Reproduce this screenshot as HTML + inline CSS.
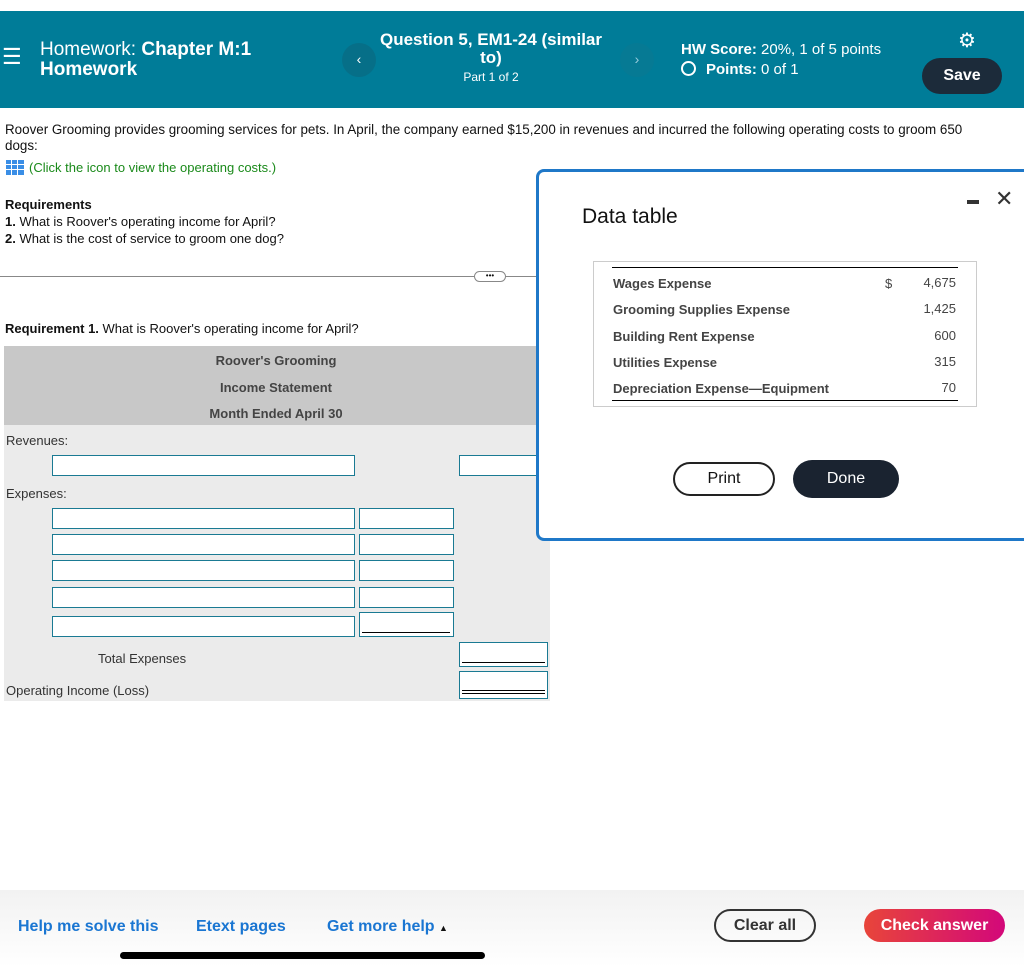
<!DOCTYPE html>
<html><head><style>
*{box-sizing:border-box;margin:0;padding:0}
body{width:1024px;height:967px;background:#fff;font-family:"Liberation Sans",Arial,sans-serif;position:relative;overflow:hidden;color:#111}
.a{position:absolute}
.hdr{left:0;top:11px;width:1024px;height:97px;background:#007c98;color:#fff}
.inp{position:absolute;background:#fff;border:1px solid #1a7a93;height:21px}
.gl{font-size:13px;color:#333}
</style></head><body>
<div class="a hdr">
  <div class="a" style="left:2px;top:36px;font-size:22px;line-height:20px">☰</div>
  <div class="a" style="left:40px;top:29px;font-size:19px;line-height:20px">Homework: <b>Chapter M:1</b><br><b>Homework</b></div>
  <div class="a" style="left:342px;top:32px;width:34px;height:34px;border-radius:50%;background:#066f88;text-align:center;line-height:32px;font-size:14px">‹</div>
  <div class="a" style="left:375px;top:20px;width:232px;text-align:center;font-size:17px;font-weight:bold;line-height:18px">Question 5, EM1-24 (similar<br>to)</div>
  <div class="a" style="left:380px;top:59px;width:222px;text-align:center;font-size:12px">Part 1 of 2</div>
  <div class="a" style="left:620px;top:32px;width:34px;height:34px;border-radius:50%;background:#067a94;text-align:center;line-height:32px;font-size:14px;color:#9cd">›</div>
  <div class="a" style="left:681px;top:30px;font-size:15px"><b>HW Score:</b> 20%, 1 of 5 points</div>
  <div class="a" style="left:681px;top:50px;font-size:15px"><span style="display:inline-block;width:15px;height:15px;border:2px solid #fff;border-radius:50%;vertical-align:-2px;margin-right:10px"></span><b>Points:</b> 0 of 1</div>
  <div class="a" style="left:958px;top:17px;font-size:20px">⚙</div>
  <div class="a" style="left:922px;top:47px;width:80px;height:36px;border-radius:18px;background:#1c2b3a;text-align:center;line-height:36px;font-weight:bold;font-size:16px">Save</div>
</div>
<div class="a" style="left:5px;top:122px;width:990px;font-size:13.4px;line-height:16px">Roover Grooming provides grooming services for pets. In April, the company earned $15,200 in revenues and incurred the following operating costs to groom 650 dogs:</div>
<div class="a" style="left:6px;top:160px;font-size:13px;color:#1a8a1a"><span style="display:inline-block;width:18px;height:15px;background:#3a8ee6;vertical-align:-3px;margin-right:5px;background-image:linear-gradient(90deg,transparent 5px,#fff 5px,#fff 6px,transparent 6px,transparent 11px,#fff 11px,#fff 12px,transparent 12px),linear-gradient(transparent 4px,#fff 4px,#fff 5px,transparent 5px,transparent 9px,#fff 9px,#fff 10px,transparent 10px)"></span>(Click the icon to view the operating costs.)</div>
<div class="a" style="left:5px;top:196px;font-size:13px;line-height:17px"><b>Requirements</b><br><b>1.</b> What is Roover's operating income for April?<br><b>2.</b> What is the cost of service to groom one dog?</div>
<div class="a" style="left:0;top:276px;width:540px;height:1px;background:#888"></div>
<div class="a" style="left:474px;top:271px;width:32px;height:11px;border:1px solid #888;border-radius:6px;background:#fff;font-size:8px;text-align:center;line-height:8px">•••</div>
<div class="a" style="left:5px;top:321px;font-size:13px"><b>Requirement 1.</b> What is Roover's operating income for April?</div>
<div class="a" style="left:4px;top:346px;width:546px;height:79px;background:#c8c8c8"></div>
<div class="a" style="left:4px;top:425px;width:546px;height:276px;background:#ebebeb"></div>
<div class="a" style="left:4px;top:348px;width:544px;text-align:center;font-size:13px;font-weight:bold;color:#444;line-height:26.5px">Roover's Grooming<br>Income Statement<br>Month Ended April 30</div>
<div class="a gl" style="left:6px;top:433px">Revenues:</div>
<div class="inp" style="left:52px;top:455px;width:303px"></div>
<div class="inp" style="left:459px;top:455px;width:90px"></div>
<div class="a gl" style="left:6px;top:486px">Expenses:</div>
<div class="inp" style="left:52px;top:508px;width:303px"></div><div class="inp" style="left:359px;top:508px;width:95px"></div>
<div class="inp" style="left:52px;top:534px;width:303px"></div><div class="inp" style="left:359px;top:534px;width:95px"></div>
<div class="inp" style="left:52px;top:560px;width:303px"></div><div class="inp" style="left:359px;top:560px;width:95px"></div>
<div class="inp" style="left:52px;top:587px;width:303px"></div><div class="inp" style="left:359px;top:587px;width:95px"></div>
<div class="inp" style="left:52px;top:616px;width:303px"></div><div class="inp" style="left:359px;top:612px;width:95px;height:25px;border-bottom:1px solid #1a7a93"><div class="a" style="left:2px;bottom:3px;width:88px;height:1px;background:#000"></div></div>
<div class="a gl" style="left:98px;top:651px">Total Expenses</div>
<div class="inp" style="left:459px;top:642px;width:89px;height:25px"><div class="a" style="left:2px;bottom:3px;width:83px;height:1px;background:#000"></div></div>
<div class="a gl" style="left:6px;top:683px">Operating Income (Loss)</div>
<div class="inp" style="left:459px;top:671px;width:89px;height:28px"><div class="a" style="left:2px;bottom:4px;width:83px;height:4px;border-top:1px solid #000;border-bottom:1px solid #000"></div></div>

<div class="a" style="left:536px;top:169px;width:500px;height:372px;border:3px solid #1f78c8;border-radius:8px;background:#fff">
  <div class="a" style="left:43px;top:33px;font-size:21px">Data table</div>
  <div class="a" style="left:428px;top:28px;width:12px;height:4px;background:#333"></div>
  <div class="a" style="left:456px;top:14px;font-size:22px;color:#333">✕</div>
  <div class="a" style="left:54px;top:89px;width:384px;height:146px;border:1px solid #ccc">
    <div class="a" style="left:18px;top:5px;width:346px;height:134px;border-top:1px solid #000;border-bottom:1px solid #000;font-size:13px;color:#444">
      <div class="a" style="left:1px;top:3px;font-weight:bold;line-height:26.3px">Wages Expense<br>Grooming Supplies Expense<br>Building Rent Expense<br>Utilities Expense<br>Depreciation Expense—Equipment</div>
      <div class="a" style="left:273px;top:8px">$</div>
      <div class="a" style="right:2px;top:2px;text-align:right;line-height:26.3px">4,675<br>1,425<br>600<br>315<br>70</div>
    </div>
  </div>
  <div class="a" style="left:134px;top:290px;width:102px;height:34px;border:2px solid #222;border-radius:17px;text-align:center;line-height:30px;font-size:16px">Print</div>
  <div class="a" style="left:254px;top:288px;width:106px;height:38px;background:#1a2330;border-radius:19px;text-align:center;line-height:38px;font-size:16px;color:#fff">Done</div>
</div>

<div class="a" style="left:0;top:890px;width:1024px;height:77px;background:linear-gradient(#f2f2f2,#fff)"></div>
<div class="a" style="left:18px;top:918px;font-size:16px;font-weight:bold;color:#1a76d2">Help me solve this</div>
<div class="a" style="left:196px;top:918px;font-size:16px;font-weight:bold;color:#1a76d2">Etext pages</div>
<div class="a" style="left:327px;top:918px;font-size:16px;font-weight:bold;color:#1a76d2">Get more help <span style="font-size:9px;color:#111">▲</span></div>
<div class="a" style="left:714px;top:909px;width:102px;height:33px;border:2px solid #333;border-radius:17px;text-align:center;line-height:29px;font-size:16px;font-weight:bold;color:#333">Clear all</div>
<div class="a" style="left:864px;top:909px;width:141px;height:33px;border-radius:17px;background:linear-gradient(90deg,#e8453a,#d3087a);text-align:center;line-height:33px;font-size:16px;font-weight:bold;color:#fff">Check answer</div>
<div class="a" style="left:120px;top:952px;width:365px;height:7px;border-radius:4px;background:#000"></div>
</body></html>
